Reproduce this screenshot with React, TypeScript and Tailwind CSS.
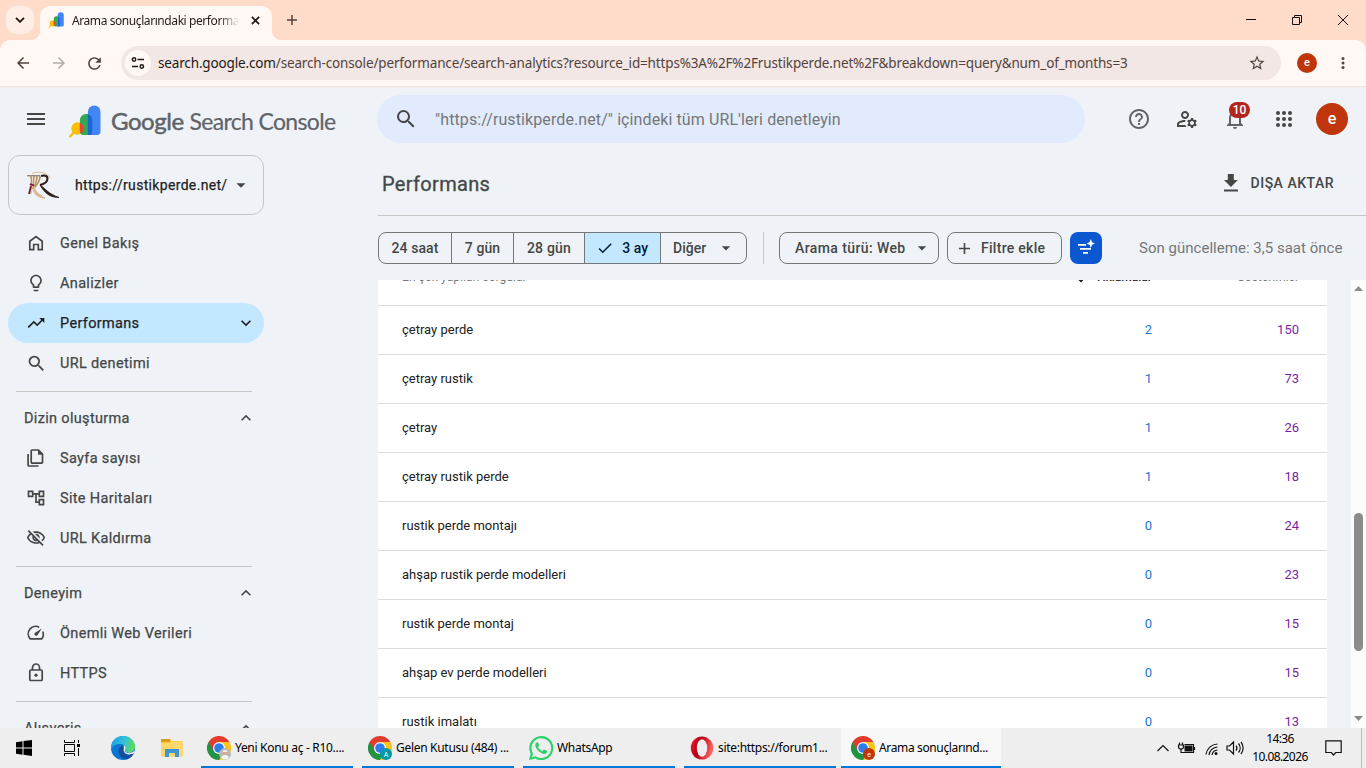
import React from "react";
import {
  MdAdd,
  MdArrowDropDown,
  MdCheck,
  MdHelpOutline,
  MdKeyboardArrowDown,
  MdKeyboardArrowUp,
  MdLightbulbOutline,
  MdMenu,
  MdNotificationsNone,
  MdOutlineAccountTree,
  MdOutlineManageAccounts,
  MdOutlineVisibilityOff,
  MdSearch,
  MdStarBorder,
  MdTrendingUp,
  MdArrowBack,
  MdArrowForward,
  MdRefresh,
} from "react-icons/md";

const rows = [
  { query: "çetray perde", clicks: 2, impressions: 150 },
  { query: "çetray rustik", clicks: 1, impressions: 73 },
  { query: "çetray", clicks: 1, impressions: 26 },
  { query: "çetray rustik perde", clicks: 1, impressions: 18 },
  { query: "rustik perde montajı", clicks: 0, impressions: 24 },
  { query: "ahşap rustik perde modelleri", clicks: 0, impressions: 23 },
  { query: "rustik perde montaj", clicks: 0, impressions: 15 },
  { query: "ahşap ev perde modelleri", clicks: 0, impressions: 15 },
  { query: "rustik imalatı", clicks: 0, impressions: 13 },
];

const ConsoleLogo = ({ className }: { className: string }) => (
  <svg viewBox="0 0 32 32" className={className}>
    <path d="M2 30.5 8 24" stroke="#fbbc04" strokeWidth="2.2" strokeLinecap="round" />
    <circle cx="9.2" cy="22.8" r="6" fill="#fbbc04" />
    <path d="M11.5 15a6 6 0 0 1 6-6.300h2v20.300h-4.500a3.500 3.500 0 0 1-3.500-3.500z" fill="#34a853" />
    <path d="M11.5 17.300a6 6 0 0 1 1.300 10.200c-.9-.8-1.300-1.500-1.300-2.500z" fill="#ea4335" />
    <path d="M19.300 6.500a6.100 6.100 0 0 1 12.200 0v19.500a3 3 0 0 1-3 3h-9.200z" fill="#4285f4" />
    <path d="M19.300 9c3 .9 4.200 3.500 4.200 6v11a3 3 0 0 1-3 3h-1.200z" fill="#1967d2" />
  </svg>
);

const CurtainLogo = () => (
  <svg viewBox="0 0 32 29" className="h-[29px] w-8" fill="none">
    <path d="M5 2.500c6-2.500 14-1.500 18 4" stroke="#d9a877" strokeWidth="0.8" />
    <path d="M0 4.800h13" stroke="#6f5540" strokeWidth="1" />
    <path d="M4 5C5 10 5 13 4 17M7 5c0 6-1 9-2 13M10 5c0 6-2 9-4 12M13 5c0 5-3 9-6 12" stroke="#b5926b" strokeWidth="1.700" />
    <path d="M5.500 5.500c.5 5 0 8-1 11M8.500 5.500c0 5-1.500 8-3 11" stroke="#efdcc4" strokeWidth="0.8" />
    <path d="M6 17c0 4 4 9 12 10M7 16c1 5 4 8 8 9M4 17v6" stroke="#dcb68d" strokeWidth="1.500" />
    <path d="M3 13l4 1.500M4 15l-2 8" stroke="#6b1730" strokeWidth="1.700" />
    <path d="M14 5c3-1 6.500-.5 6.500 2.500 0 3-3 5.500-7.500 6.500" stroke="#2c1a17" strokeWidth="2" />
    <path d="M13 14c4 2 8 9 19 12.500-9 0-14-4-19-12.500" stroke="#2c1a17" strokeWidth="0.8" fill="#2c1a17" />
  </svg>
);

const HomeIcon = () => (
  <svg viewBox="0 0 20 20" className="size-5" fill="none" stroke="currentColor" strokeWidth="1.700">
    <path d="M3.800 8.200 10 3.500l6.200 4.700v8.500h-3.900v-5.200H7.700v5.200H3.800z" />
  </svg>
);

const PagesIcon = () => (
  <svg viewBox="0 0 20 20" className="size-5" fill="none" stroke="currentColor" strokeWidth="1.700">
    <path d="M6 2h6.500l4 4v8.300a.8.8 0 0 1-.8.8H6a.8.8 0 0 1-.8-.8V2.800A.8.8 0 0 1 6 2z" />
    <path d="M12 1.800v5h4.900z" fill="currentColor" stroke="none" />
    <path d="M2.100 6v11.200a.8.8 0 0 0 .8.800h9.600" />
  </svg>
);

const SpeedIcon = () => (
  <svg viewBox="0 0 20 20" className="size-5" fill="none" stroke="currentColor" strokeWidth="1.700">
    <path d="M13.200 4.300A7.400 7.400 0 0 0 4.200 15.800h11.600a7.400 7.400 0 0 0 1-7.300" strokeLinejoin="round" />
    <path d="m15.800 5.400-4.200 6.500a1.700 1.700 0 0 1-2.900-1.900z" fill="currentColor" stroke="none" />
  </svg>
);

const LockIcon = () => (
  <svg viewBox="0 0 20 20" className="size-5" fill="none" stroke="currentColor" strokeWidth="1.700">
    <rect x="3.800" y="7" width="12.400" height="10.500" rx="1" />
    <path d="M6.500 7V4.500a3.500 3.500 0 0 1 7 0V7" />
    <circle cx="10" cy="12.200" r="1.600" fill="currentColor" stroke="none" />
  </svg>
);

const Chrome = ({ badge, color }: { badge: string; color: string }) => (
  <svg viewBox="0 0 24 24" className="size-6 shrink-0">
    <path d="M12 12V6h10.400A12 12 0 0 1 12 24z" fill="#fcc419" />
    <path d="M1.600 6A12 12 0 0 0 12 24l5.200-9L12 12V6z" fill="#229342" />
    <path d="M12 6 6.800 15 1.600 6A12 12 0 0 1 22.400 6z" fill="#e33b2e" />
    <circle cx="12" cy="12" r="6" fill="#fff" />
    <circle cx="12" cy="12" r="4.800" fill="#2f7cf0" />
    <circle cx="18" cy="18" r="6" fill={color} />
    {badge ? (
      <text x="18" y="20.500" fontSize="7" fill="#fff" textAnchor="middle" fontFamily="Roboto, sans-serif">
        {badge}
      </text>
    ) : (
      <>
        <circle cx="18" cy="16.800" r="2.400" fill="#dba98f" />
        <path d="M15.400 16a2.700 2.700 0 0 1 5.200 0z" fill="#f3f1ed" />
        <path d="M14 22c.5-4 7.500-4 8 0a6 6 0 0 1-8 0z" fill="#f4f4f4" />
      </>
    )}
  </svg>
);

const WhatsApp = () => (
  <svg viewBox="0 0 24 24" className="size-6 shrink-0">
    <path d="M0 24 1.700 17.800A12 12 0 1 1 6.200 22.400z" fill="#25d366" />
    <path d="M2.900 21.200 4 17.500A9.900 9.900 0 1 1 6.600 20.200z" fill="#eee" />
    <path d="M8.300 6.200c-.4 0-2 .8-2 3 0 3.500 5.400 8.700 9 8.700 1.800 0 3-1.400 2.800-2.700-.1-.4-2.800-1.700-3.200-1.600-.5.200-1 1.500-1.500 1.600-.9 0-4-2.700-4.300-4 0-.5 1-1.200 1-1.700L9 6.600c-.1-.3-.4-.4-.7-.4z" fill="#25d366" />
  </svg>
);

const Opera = () => (
  <svg viewBox="0 0 24 24" className="size-6 shrink-0">
    <defs>
      <linearGradient id="opera" x1="0" y1="0" x2="1" y2="0.300">
        <stop offset="0" stopColor="#ff1b2d" />
        <stop offset="0.450" stopColor="#b00012" />
        <stop offset="1" stopColor="#ff5c5c" />
      </linearGradient>
    </defs>
    <ellipse cx="12" cy="12" rx="11.200" ry="11.500" fill="url(#opera)" />
    <ellipse cx="12" cy="12" rx="5.200" ry="8.700" fill="#eee" />
  </svg>
);

const Edge = () => (
  <svg viewBox="0 0 24 24" className="size-6">
    <defs>
      <linearGradient id="edgeTop" x1="0" y1="0.300" x2="1" y2="0.500">
        <stop offset="0" stopColor="#1f9fe0" />
        <stop offset="0.500" stopColor="#2fc2df" />
        <stop offset="1" stopColor="#5fdc5a" />
      </linearGradient>
    </defs>
    <circle cx="12" cy="12" r="12" fill="#0b76d1" />
    <path d="M0 11C1 4 6 0 12 0c7 0 12 5 12 10.500 0 4-3 6-6.500 6-3 0-4-1.200-3.500-2 1.500-2.500.5-6-4-6.500C6 7.500 2 9 0 13z" fill="url(#edgeTop)" />
    <path d="M12.500 9.500c-2 0-5 2.500-5 6 0 5 5 8 8.500 7.800A12 12 0 0 0 23 17c-4 2.500-9 1.500-10-1.500-.8-2 .8-3 .5-4.500z" fill="#124f9e" />
    <path d="M12.500 9.500c2.200 0 2.800 2.500 1.500 4.700-.8 1.500.7 2.600 3.500 2.600 2 0 4-.5 6-1.800l-.5 2c-4 2.500-9 1.500-10-1.500-1-2 .5-3.500-.5-6z" fill="#eee" />
  </svg>
);

const navMain = [
  { label: "Genel Bakış", icon: <HomeIcon /> },
  { label: "Analizler", icon: <MdLightbulbOutline size={20} /> },
  { label: "Performans", icon: <MdTrendingUp size={20} />, active: true },
  { label: "URL denetimi", icon: <MdSearch size={21} className="-mr-px" /> },
];

const navIndex = [
  { label: "Sayfa sayısı", icon: <PagesIcon /> },
  { label: "Site Haritaları", icon: <MdOutlineAccountTree size={20} /> },
  { label: "URL Kaldırma", icon: <MdOutlineVisibilityOff size={20} /> },
];

const navExperience = [
  { label: "Önemli Web Verileri", icon: <SpeedIcon /> },
  { label: "HTTPS", icon: <LockIcon /> },
];

const NavItem = ({ label, icon, active }: { label: string; icon: React.ReactNode; active?: boolean }) => (
  <div
    className={`ml-2 flex h-10 w-64 shrink-0 items-center rounded-full pl-[18px] pr-2 ${
      active ? "bg-[#c2e7ff] text-[#1f1f1f]" : ""
    }`}
  >
    {icon}
    <span className="ml-3.5 flex-1 pt-0.5">{label}</span>
    {active && <MdKeyboardArrowDown size={20} />}
  </div>
);

const NavGroup = ({ title, children }: { title: string; children?: React.ReactNode }) => (
  <>
    <div className="ml-4 mt-2 mb-1.5 h-px w-[236px] shrink-0 bg-[#c4c7c5]" />
    <div className="ml-6 flex h-10 w-[232px] shrink-0 items-center justify-between">
      <span className="pt-0.5">{title}</span>
      <MdKeyboardArrowUp size={20} />
    </div>
    {children}
  </>
);

const Sidebar = () => (
  <aside className="flex w-[378px] shrink-0 flex-col overflow-hidden pt-1 text-[14.5px] tracking-[0.330px] [-webkit-text-stroke:0.250px_currentColor]">
    <div className="ml-2 mb-2 flex h-[60px] w-64 shrink-0 items-center rounded-xl border border-[#c4c7c5] pl-[18px] text-[#1f1f1f]">
      <CurtainLogo />
      <span className="ml-4 w-[155px] text-sm tracking-[0.330px] whitespace-nowrap">https://rustikperde.net/</span>
      <MdArrowDropDown size={22} className="text-[#444746]" />
    </div>
    {navMain.map((item) => (
      <NavItem key={item.label} {...item} />
    ))}
    <NavGroup title="Dizin oluşturma">
      {navIndex.map((item) => (
        <NavItem key={item.label} {...item} />
      ))}
    </NavGroup>
    <NavGroup title="Deneyim">
      {navExperience.map((item) => (
        <NavItem key={item.label} {...item} />
      ))}
    </NavGroup>
    <NavGroup title="Alışveriş" />
  </aside>
);

const BrowserTabs = () => (
  <div className="flex h-10 bg-[#ffdbc9]">
    <div className="ml-1.5 mt-1.5 flex size-7 items-center justify-center rounded-[10px] bg-[#ffeee6]">
      <svg viewBox="0 0 10 6" className="h-1.5 w-2.5" fill="none" stroke="#2b1710" strokeWidth="1.900">
        <path d="m1 .8 4 4 4-4" />
      </svg>
    </div>
    <div className="relative ml-1.5 mt-1.5 flex h-[34px] w-[232px] items-center rounded-t-[10px] bg-[#fff8f5] pb-1.5">
      <div className="absolute -left-2.5 bottom-0 size-2.5 bg-[radial-gradient(circle_at_0_0,#ffdbc9_10px,#fff8f5_10.500px)]" />
      <div className="absolute -right-2.5 bottom-0 size-2.5 bg-[radial-gradient(circle_at_100%_0,#ffdbc9_10px,#fff8f5_10.500px)]" />
      <ConsoleLogo className="ml-2 size-4" />
      <span className="ml-2 w-[167px] overflow-hidden bg-gradient-to-r from-[#231917] from-88% to-transparent bg-clip-text pt-0.5 font-['Noto_Sans',sans-serif] text-xs tracking-[-0.420px] whitespace-nowrap text-transparent">
        Arama sonuçlarındaki performans
      </span>
      <svg viewBox="0 0 10 10" className="ml-3 size-[9px]" stroke="#231917" strokeWidth="1.900">
        <path d="m1 1 8 8M9 1 1 9" />
      </svg>
    </div>
    <svg viewBox="0 0 10 10" className="ml-[15px] mt-[15px] size-2.5" stroke="#53433e" strokeWidth="1.500">
      <path d="M5 0v10M0 5h10" />
    </svg>
    <svg viewBox="0 0 110 12" className="mt-3.5 mr-[16px] ml-auto h-3 w-[110px]" fill="none" stroke="#111" strokeWidth="1">
      <path d="M6 5.500h10M98 1l10 10M108 1l-10 10M52.500 3.500h7v7h-7zM54.500 3.500v-2h7v7h-2" />
    </svg>
  </div>
);

const AddressBar = () => (
  <div className="bg-[#ffdbc9]">
    <div className="flex h-[47px] items-center rounded-t-[10px] border-b border-[#f5ddd1] bg-[#fff8f5] text-[#53433e]">
      <MdArrowBack size={18} className="ml-3.5" />
      <MdArrowForward size={18} className="ml-[18px] text-[#b5aaa6]" />
      <MdRefresh size={19} className="ml-[17px]" />
      <div className="ml-[17px] flex h-[34px] w-[1160px] items-center rounded-full bg-[#f2e7e4]">
        <div className="ml-1 flex size-[26px] items-center justify-center rounded-full bg-[#fff8f5]">
          <svg viewBox="0 0 14 12" className="h-3 w-3.5" fill="none" stroke="#231917" strokeWidth="1.500">
            <circle cx="3" cy="2.500" r="1.700" />
            <path d="M6.500 2.500H13M1 9.500h6" />
            <circle cx="10.800" cy="9.500" r="1.700" />
          </svg>
        </div>
        <span className="ml-[7px] flex-1 pt-px font-['Noto_Sans',sans-serif] text-[13.500px] tracking-[-0.150px] whitespace-nowrap">
          <span className="text-[#231917]">search.google.com</span>
          /search-console/performance/search-analytics?resource_id=https%3A%2F%2Frustikperde.net%2F&amp;breakdown=query&amp;num_of_months=3
        </span>
        <MdStarBorder size={18} className="mr-[15px]" />
      </div>
      <div className="ml-4 flex size-5 items-center justify-center rounded-full bg-[#bf360c] pb-px text-[11px] leading-none font-medium text-white">
        e
      </div>
      <svg viewBox="0 0 4 14" className="ml-6 h-3.5 w-1" fill="currentColor">
        <circle cx="2" cy="2.500" r="1.500" />
        <circle cx="2" cy="7" r="1.500" />
        <circle cx="2" cy="11.500" r="1.500" />
      </svg>
    </div>
  </div>
);

const Header = () => (
  <header className="flex h-16 shrink-0 items-center">
    <MdMenu size={24} className="ml-6" />
    <ConsoleLogo className="ml-5 mt-1 size-[33px]" />
    <div className="ml-2.5 mt-1 w-[266px] font-[Lato,sans-serif] text-[24px] tracking-[-0.450px] whitespace-nowrap text-[#5f6368]">
      <span className="[-webkit-text-stroke:0.500px_#5f6368]">Google</span>{" "}
      <span className="text-[23px] tracking-[-0.650px] [-webkit-text-stroke:0.200px_#5f6368]">Search Console</span>
    </div>
    <div className="flex h-12 w-[708px] items-center rounded-full bg-[#e1ebfd]">
      <MdSearch size={24} className="ml-[17px]" />
      <span className="ml-[17px] pt-0.5 text-base tracking-[0.100px] text-[#757778]">
        "https://rustikperde.net/" içindeki tüm URL'leri denetleyin
      </span>
    </div>
    <MdHelpOutline size={24} className="ml-[42px] text-[#5f6368]" />
    <MdOutlineManageAccounts size={24} className="ml-6" />
    <div className="relative ml-6">
      <MdNotificationsNone size={24} className="text-[#5f6368]" />
      <span className="absolute -top-[5px] left-1.5 flex h-4 w-[21px] items-center justify-center rounded-full bg-[#b3261e] text-xs font-medium text-white">
        10
      </span>
    </div>
    <svg viewBox="0 0 16 16" className="ml-[29px] size-4" fill="currentColor">
      {[2, 8, 14].map((y) => [2, 8, 14].map((x) => <circle key={`${x}-${y}`} cx={x} cy={y} r="2" />))}
    </svg>
    <div className="ml-6 flex size-8 items-center justify-center rounded-full bg-[#bf360c] pb-px text-base font-medium text-white">
      e
    </div>
  </header>
);

const Filters = () => (
  <div className="flex h-16 shrink-0 items-center text-sm font-medium">
    <div className="flex h-8 w-[369px] overflow-hidden rounded-lg border border-[#747775]">
      <div className="flex w-[73px] items-center justify-center border-r border-[#747775] tracking-[0.1px]">24 saat</div>
      <div className="flex w-[62px] items-center justify-center border-r border-[#747775] tracking-[0.1px]">7 gün</div>
      <div className="flex w-[71px] items-center justify-center border-r border-[#747775] tracking-[0.2px]">28 gün</div>
      <div className="flex w-[76px] items-center justify-between border-r border-[#747775] bg-[#c2e7ff] pr-3 pl-[11px] text-[#001d35]">
        <MdCheck size={18} />
        3 ay
      </div>
      <div className="flex flex-1 items-center justify-between pr-2.5 pl-3">
        Diğer
        <MdArrowDropDown size={20} />
      </div>
    </div>
    <div className="ml-4 h-8 w-px bg-[#c4c7c5]" />
    <div className="ml-[15px] flex h-8 w-40 items-center justify-between rounded-lg border border-[#747775] pr-1.5 pl-[15px] tracking-[0.400px]">
      Arama türü: Web
      <MdArrowDropDown size={20} />
    </div>
    <div className="ml-2 flex h-8 w-[115px] items-center rounded-lg border border-[#747775] pl-[7px]">
      <MdAdd size={19} />
      <span className="ml-[7px] tracking-[0.280px]">Filtre ekle</span>
    </div>
    <div className="ml-2 flex size-8 items-center justify-center rounded-lg bg-[#0b57d0]">
      <svg viewBox="0 0 18 16" className="mb-0.5 h-4 w-[18px]" fill="#fff">
        <path d="M1 5h8v1.800H1zM3 9h11v1.800H3zM6 13h5v1.800H6z" />
        <path d="M13.800 0l1.300 3.200 3 1.300-3 1.300-1.300 3.200-1.300-3.200-3-1.300 3-1.300z" />
      </svg>
    </div>
    <span className="ml-[37px] pt-0.5 text-[15px] font-normal tracking-[0.020px] whitespace-nowrap text-[#757778]">
      Son güncelleme: 3,5 saat önce
    </span>
  </div>
);

const QueryTable = () => (
  <div className="flex min-h-0 flex-1">
    <div className="w-[949px] overflow-hidden bg-white text-[13px]">
      <div className="-mt-[31px] flex h-[57px] items-center border-b border-[#dadce0] pr-7 pl-6 text-xs text-[#757575]">
        <span className="flex-1 tracking-[0.060px]">En çok yapılan sorgular</span>
        <span className="flex items-center font-medium text-[#212121]">
          <svg viewBox="0 0 12 12" className="mr-2 size-3" fill="none" stroke="currentColor" strokeWidth="1.500">
            <path d="M6 0v10M2 6.500l4 4 4-4" />
          </svg>
          Tıklamalar
        </span>
        <span className="w-[147px] text-right">Gösterimler</span>
      </div>
      {rows.map((row) => (
        <div key={row.query} className="flex h-[49px] items-center border-b border-[#dadce0] pr-7 pl-6 text-[#212121]">
          <span className="flex-1">{row.query}</span>
          <span className="text-[#1976d2]">{row.clicks}</span>
          <span className="w-[147px] text-right text-[#7b1fa2]">{row.impressions}</span>
        </div>
      ))}
    </div>
    <div className="ml-auto flex w-[15px] flex-col items-center bg-[#fcfcfc]">
      <svg viewBox="0 0 9 5" className="mt-1.5 h-[5px] w-[9px]" fill="#8b8b8b">
        <path d="M0 5 4.500 0 9 5z" />
      </svg>
      <div className="mt-[222px] h-[138px] w-[9px] rounded-full bg-[#8b8b8b]" />
      <svg viewBox="0 0 9 5" className="mt-auto mb-[7px] h-[5px] w-[9px]" fill="#8b8b8b">
        <path d="M0 0 4.500 5 9 0z" />
      </svg>
    </div>
  </div>
);

const tasks = [
  { label: "Yeni Konu aç - R10....", icon: <Chrome badge="" color="#b9bab2" /> },
  { label: "Gelen Kutusu (484) ...", icon: <Chrome badge="A" color="#0097a7" /> },
  { label: "WhatsApp", icon: <WhatsApp /> },
  { label: "site:https://forum1...", icon: <Opera /> },
];

const Taskbar = () => (
  <footer className="flex h-10 shrink-0 items-center bg-[#eeeeee] font-['Noto_Sans',sans-serif] text-xs text-black">
    <svg viewBox="0 0 16 16" className="ml-4 size-4">
      <path d="M0 2.200 6.500 1.300V7.500H0zM7.500 1.100 16 0v7.500H7.500zM0 8.500h6.500v6.200L0 13.800zM7.500 8.500H16V16l-8.500-1.200z" />
    </svg>
    <svg viewBox="0 0 17 16" className="ml-8 h-4 w-[17px]" fill="none" stroke="#000">
      <path d="M.5 0v2.500h10V0M.5 4.500h10v7H.5zM.5 16v-2.500h10V16M14.500 0v3M14.500 8v8" />
      <path d="M13 4h3v3h-3z" fill="#000" stroke="none" />
    </svg>
    <div className="ml-[30px]">
      <Edge />
    </div>
    <svg viewBox="0 0 22 18" className="ml-[26px] h-[18px] w-[22px]">
      <path d="M0 0h9l2 2h10.500v15.500H0z" fill="#f8c547" />
      <path d="M0 0h9v3H0z" fill="#dd9d16" />
      <path d="M0 4h9l1.500-1.500h11V17H0z" fill="#ffd768" />
      <path d="M4 18v-8h14v8h-4v-4H8v4z" fill="#3f94d4" />
    </svg>
    <div className="ml-[18px] flex h-full gap-[9px]">
      {tasks.map((task) => (
        <div key={task.label} className="flex h-full w-[152px] items-center border-b-2 border-[#0078d7] pt-0.5 pl-1.5">
          {task.icon}
          <span className="ml-1 tracking-[-0.300px] whitespace-nowrap">{task.label}</span>
        </div>
      ))}
    </div>
    <div className="ml-[5px] flex h-full w-40 items-center border-b-2 border-[#0078d7] bg-[#f8f8f8] pt-0.5 pl-2.5">
      <Chrome badge="e" color="#bf360c" />
      <span className="ml-1 tracking-[-0.360px] whitespace-nowrap">Arama sonuçlarınd...</span>
    </div>
    <svg viewBox="0 0 90 16" className="ml-[155px] h-4 w-[90px]" fill="none" stroke="#111" strokeWidth="1.200">
      <path d="m1.500 11 5.500-5.500L12.500 11" />
      <path d="M28.500 4.500h9v8H28M38.500 7v3M23.500 2.500V5M26.500 2.500V5M22.500 5h5v1.500a2.500 2.500 0 0 1-5 0zM25 9v3.500h4" />
      <path d="M28.500 5.500h8v6h-8z" fill="#111" stroke="none" />
      <path d="M50 14.500A12 12 0 0 1 61.500 4M53 15a9 9 0 0 1 8.500-8M56 15a6 6 0 0 1 5.500-5" />
      <circle cx="60" cy="13.500" r="1.500" fill="#111" stroke="none" />
      <path d="M71 6h2.500l4-4v12l-4-4H71zM80 5.500a4 4 0 0 1 0 5M82.500 3.500a7 7 0 0 1 0 9M85 2a9.500 9.500 0 0 1 0 12" />
    </svg>
    <div className="ml-[5px] flex w-[58px] flex-col items-center leading-[18px] tracking-[-0.600px]">
      <span>14:36</span>
      <span>10.08.2026</span>
    </div>
    <svg viewBox="0 0 17 16" className="ml-4 h-4 w-[17px]" fill="none" stroke="#111" strokeWidth="1.200">
      <path d="M.8.8h15.400v11.700h-5.500L8.500 15l-2.200-2.500H.8z" />
    </svg>
    <div className="mr-1 ml-auto h-full w-px bg-[#c0c0c0]" />
  </footer>
);

const App = () => {
  return (
    <div className="flex h-[768px] w-[1366px] flex-col overflow-hidden bg-[#eff3f8] font-[Roboto,sans-serif] text-[#444746]">
      <BrowserTabs />
      <AddressBar />
      <Header />
      <div className="flex min-h-0 flex-1">
        <Sidebar />
        <main className="flex min-w-0 flex-1 flex-col">
          <div className="flex h-[65px] shrink-0 items-center border-b border-[#c4c7c5] pr-8 pl-1">
            <h1 className="flex-1 pt-0.5 text-[20px] tracking-[0.330px] [-webkit-text-stroke:0.300px_currentColor]">
              Performans
            </h1>
            <svg viewBox="0 0 16 18" className="mr-3 h-[18px] w-4" fill="currentColor">
              <path d="M4.800 0h6v6h4L8 13 1 6h3.800zM1 15.500h14v2H1z" />
            </svg>
            <span className="text-sm font-medium tracking-[0.500px]">DIŞA AKTAR</span>
          </div>
          <Filters />
          <QueryTable />
        </main>
      </div>
      <Taskbar />
    </div>
  );
};

export default App;
